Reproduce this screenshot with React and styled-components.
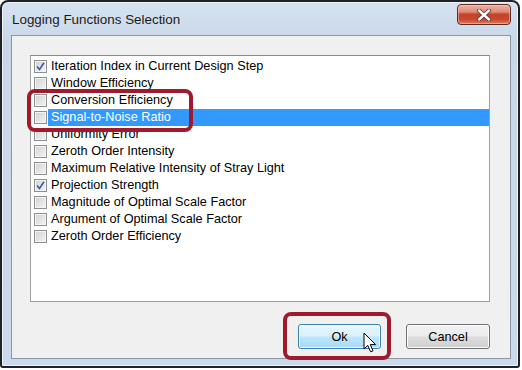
import React from "react";
import styled, { createGlobalStyle, css } from "styled-components";

const Global = createGlobalStyle`
  html, body { margin: 0; padding: 0; background: #ffffff; }
  body { font-family: "Liberation Sans", Arial, sans-serif; }
`;

const Stage = styled.div`
  position: relative;
  width: 522px;
  height: 370px;
`;

const Window = styled.div`
  box-sizing: border-box;
  width: 520px;
  height: 368px;
  border: 2px solid #1f2226;
  border-radius: 8px 8px 3px 3px;
  background: linear-gradient(180deg, #d6e2ef 0%, #c9d8e9 40px, #cbdaea 100%);
  box-shadow: inset 0 0 0 1px rgba(255, 255, 255, 0.6);
  display: flex;
  flex-direction: column;
  padding: 0 7px 7px 9px;
`;

const TitleBar = styled.div`
  height: 33px;
  display: flex;
  align-items: flex-start;
  justify-content: space-between;
`;

const Title = styled.div`
  font-family: "Liberation Sans", Arial, sans-serif;
  font-size: 13.4px;
  color: #1b1b1b;
  margin-top: 10px;
  margin-left: 1px;
`;

const CloseButton = styled.div`
  box-sizing: border-box;
  width: 54px;
  height: 21px;
  margin-top: 2px;
  border: 1px solid #5f2a22;
  border-radius: 4px;
  background: linear-gradient(180deg, #eab3a6 0%, #de8c78 35%, #c4412a 50%, #c8472e 75%, #dc7a5a 100%);
  box-shadow: inset 0 0 0 1px rgba(255, 210, 200, 0.5);
  display: flex;
  align-items: center;
  justify-content: center;
`;

const Client = styled.div`
  flex: 1;
  box-sizing: border-box;
  background: #f0f0f0;
  border: 1px solid #8c97a4;
  display: flex;
  flex-direction: column;
  padding: 19px 20px 8px 18px;
`;

const ListBox = styled.div`
  box-sizing: border-box;
  width: 460px;
  height: 247px;
  background: #ffffff;
  border: 1px solid #a0a0a0;
  border-top-color: #8a8a8a;
  padding: 2px 0 0 3px;
  display: flex;
  flex-direction: column;
`;

const Row = styled.div`
  height: 17px;
  display: flex;
  align-items: center;
`;

const Box = styled.div`
  box-sizing: border-box;
  width: 13px;
  height: 13px;
  border: 1px solid #8e8f8f;
  background: linear-gradient(135deg, #d2d2d2 0%, #e6e6e6 60%, #f4f4f4 100%);
  box-shadow: inset 0 0 0 1px #f4f4f4;
  display: flex;
  align-items: center;
  justify-content: center;
  flex-shrink: 0;
`;

const Label = styled.div`
  flex: 1;
  height: 17px;
  margin-left: 1px;
  padding-left: 3px;
  font-size: 12.7px;
  line-height: 17px;
  color: #000;
  white-space: nowrap;
  ${(p) =>
    p.$selected &&
    css`
      background: #3399ff;
      color: #ffffff;
    `}
`;

const ButtonRow = styled.div`
  display: flex;
  justify-content: flex-end;
  gap: 25px;
  margin-top: 22px;
`;

const Button = styled.div`
  box-sizing: border-box;
  width: ${(p) => p.$w}px;
  height: 25px;
  border: 1px solid #707070;
  border-radius: 3px;
  font-size: 12.7px;
  color: #000;
  display: flex;
  align-items: center;
  justify-content: center;
  background: linear-gradient(180deg, #f2f2f2 0%, #ebebeb 48%, #dddddd 52%, #cfcfcf 100%);
  box-shadow: inset 0 0 0 1px #fcfcfc;
  ${(p) =>
    p.$hot &&
    css`
      border-color: #3c7fb1;
      background: linear-gradient(180deg, #eaf6fd 0%, #d9f0fc 48%, #bee6fd 52%, #a7d9f5 100%);
    `}
`;

const Highlight = styled.div`
  position: absolute;
  box-sizing: border-box;
  border: 4px solid #9f1a2c;
  border-radius: 8px;
  left: ${(p) => p.$x}px;
  top: ${(p) => p.$y}px;
  width: ${(p) => p.$w}px;
  height: ${(p) => p.$h}px;
  pointer-events: none;
`;

const Cursor = styled.svg`
  position: absolute;
  left: 363px;
  top: 332px;
`;

const Check = () => (
  <svg width="9" height="9" viewBox="0 0 9 9">
    <path d="M1 4.5 L3.5 7.5 L8 0.8" fill="none" stroke="#3a5aa6" strokeWidth="1.6" />
  </svg>
);

const CloseX = () => (
  <svg width="16" height="12" viewBox="0 0 16 12">
    <path d="M3 1.5 L13 10.5 M13 1.5 L3 10.5" stroke="#5a2a22" strokeWidth="4" strokeLinecap="round" />
    <path d="M3 1.5 L13 10.5 M13 1.5 L3 10.5" stroke="#ffffff" strokeWidth="2.4" strokeLinecap="round" />
  </svg>
);

const items = [
  { label: "Iteration Index in Current Design Step", checked: true },
  { label: "Window Efficiency" },
  { label: "Conversion Efficiency" },
  { label: "Signal-to-Noise Ratio", selected: true },
  { label: "Uniformity Error" },
  { label: "Zeroth Order Intensity" },
  { label: "Maximum Relative Intensity of Stray Light" },
  { label: "Projection Strength", checked: true },
  { label: "Magnitude of Optimal Scale Factor" },
  { label: "Argument of Optimal Scale Factor" },
  { label: "Zeroth Order Efficiency" },
];

export default function App() {
  return (
    <Stage>
      <Global />
      <Window>
        <TitleBar>
          <Title>Logging Functions Selection</Title>
          <CloseButton>
            <CloseX />
          </CloseButton>
        </TitleBar>
        <Client>
          <ListBox>
            {items.map((it) => (
              <Row key={it.label}>
                <Box>{it.checked && <Check />}</Box>
                <Label $selected={it.selected}>{it.label}</Label>
              </Row>
            ))}
          </ListBox>
          <ButtonRow>
            <Button $w={83} $hot>Ok</Button>
            <Button $w={84}>Cancel</Button>
          </ButtonRow>
        </Client>
      </Window>
      <Highlight $x={27} $y={89} $w={166} $h={43} />
      <Highlight $x={283} $y={312} $w={108} $h={48} />
      <Cursor width="16" height="22" viewBox="0 0 16 22">
        <path
          d="M1 1 L1 17 L4.8 13.4 L7.6 19.8 L10 18.8 L7.3 12.6 L12.6 12.6 Z"
          fill="#ffffff"
          stroke="#000000"
          strokeWidth="1"
          strokeLinejoin="miter"
        />
      </Cursor>
    </Stage>
  );
}
